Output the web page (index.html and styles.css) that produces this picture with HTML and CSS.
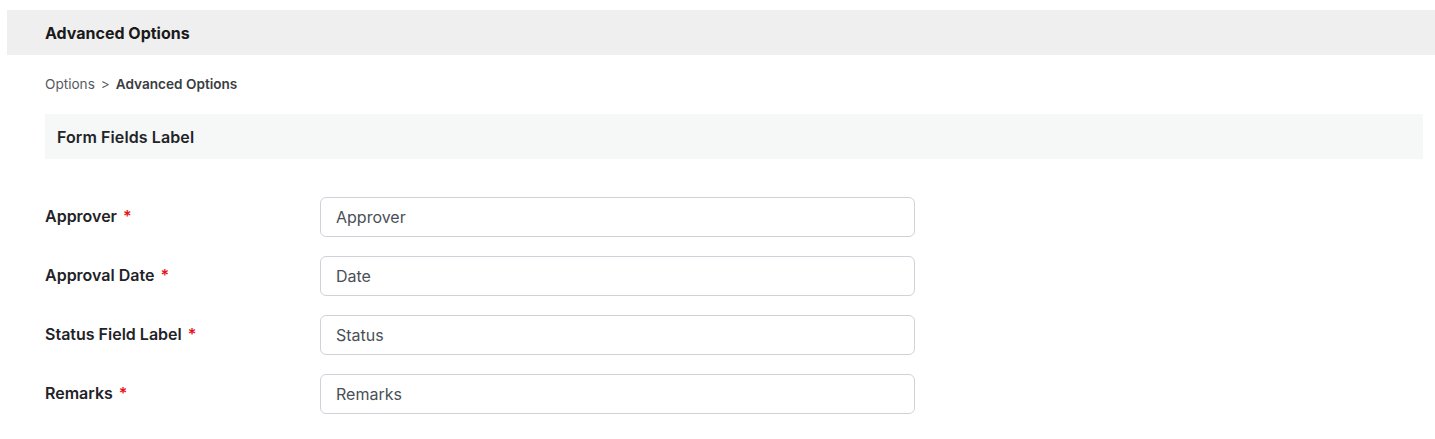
FILE: index.html
```html
<!DOCTYPE html>
<html>
<head>
<meta charset="utf-8">
<link rel="stylesheet" href="styles.css">
</head>
<body>
<div class="page">
  <div class="header">Advanced Options</div>
  <div class="content">
    <div class="breadcrumb"><span class="crumb">Options</span><span class="sep">&gt;</span><span class="current">Advanced Options</span></div>
    <div class="section">Form Fields Label</div>
    <div class="form">
      <div class="row">
        <label class="label">Approver <span class="req">*</span></label>
        <input class="input" type="text" value="Approver">
      </div>
      <div class="row">
        <label class="label">Approval Date <span class="req">*</span></label>
        <input class="input" type="text" value="Date">
      </div>
      <div class="row">
        <label class="label">Status Field Label <span class="req">*</span></label>
        <input class="input" type="text" value="Status">
      </div>
      <div class="row">
        <label class="label">Remarks <span class="req">*</span></label>
        <input class="input" type="text" value="Remarks">
      </div>
    </div>
  </div>
</div>
</body>
</html>
```

FILE: styles.css
```css
html, body {
  margin: 0;
  padding: 0;
  background: #ffffff;
}
body {
  font-family: Inter, "Noto Sans", sans-serif;
  color: #1f2328;
}
.page {
  padding: 10px 0 0 7px;
}
.header {
  height: 45px;
  background: #efefef;
  display: flex;
  align-items: center;
  padding-left: 38px;
  font-size: 16px;
  font-weight: 700;
  color: #1a1a1a;
}
.content {
  padding: 0 12px 0 38px;
}
.breadcrumb {
  height: 59px;
  display: flex;
  align-items: center;
  padding-bottom: 2px;
  box-sizing: border-box;
  font-size: 13.6px;
  color: #555a60;
}
.breadcrumb .sep {
  margin: 0 6px;
}
.breadcrumb .current {
  font-weight: 600;
  color: #3a3d42;
}
.section {
  height: 45px;
  background: #f6f7f7;
  display: flex;
  align-items: center;
  padding-left: 12px;
  font-size: 16px;
  font-weight: 600;
  letter-spacing: 0.1px;
  color: #222428;
}
.form {
  padding-top: 38px;
  display: flex;
  flex-direction: column;
  gap: 19px;
}
.row {
  display: flex;
  align-items: center;
}
.label {
  width: 275px;
  font-size: 16px;
  font-weight: 600;
  color: #1f2328;
  align-self: flex-start;
  padding-top: 9px;
}
.req {
  color: #e5141b;
  margin-left: 2px;
}
.input {
  box-sizing: border-box;
  width: 595px;
  height: 40px;
  border: 1px solid #cfd3d9;
  border-radius: 6px;
  padding: 0 15px;
  font-family: Inter, "Noto Sans", sans-serif;
  font-size: 16px;
  color: #4a4f57;
  background: #fff;
  outline: none;
}
```
